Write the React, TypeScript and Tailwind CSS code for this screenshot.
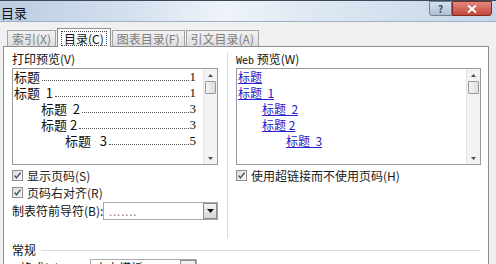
import React from "react";

const cjk = { fontFamily: '"Noto Sans CJK SC", "Noto Sans", sans-serif' };
const serif = { fontFamily: '"Liberation Serif", "Noto Sans CJK SC", serif' };

function Check({ label }: { label: string }) {
  return (
    <div className="flex items-center gap-[4px] h-[17px]">
      <div className="w-[11px] h-[11px] border border-[#8f8f8f] bg-[linear-gradient(135deg,#dcdcdc,#fafafa)] flex items-center justify-center">
        <svg width="9" height="9" viewBox="0 0 9 9">
          <path d="M1.5 4.5 L3.5 6.8 L7.5 1.8" fill="none" stroke="#4a5a6a" strokeWidth="1.4" />
        </svg>
      </div>
      <span className="text-[12px] leading-[14px] text-[#1a1a1a] whitespace-nowrap">{label}</span>
    </div>
  );
}

function ScrollBar() {
  return (
    <div className="w-[14px] flex flex-col bg-[#f3f3f3] border-l border-[#e4e4e4]">
      <div className="h-[12px] flex items-center justify-center">
        <svg width="5" height="3" viewBox="0 0 5 3"><path d="M0 3 L2.5 0 L5 3Z" fill="#505050" /></svg>
      </div>
      <div className="mx-[1px] h-[13px] border border-[#9a9a9a] rounded-[1px] bg-[linear-gradient(to_right,#f4f4f4,#dedede)]" />
      <div className="flex-1" />
      <div className="h-[12px] flex items-center justify-center">
        <svg width="5" height="3" viewBox="0 0 5 3"><path d="M0 0 L2.5 3 L5 0Z" fill="#505050" /></svg>
      </div>
    </div>
  );
}

function TocLine({ text, num, indent }: { text: string; num: string; indent: number }) {
  return (
    <div className="flex items-end h-[16px] text-[12px] leading-[16px] text-[#111]" style={{ paddingLeft: indent }}>
      <span style={cjk} className="whitespace-pre text-[13px]">{text}</span>
      <span className="flex-1 ml-[2px] mr-[1px] mb-[4px] border-b border-dotted border-[#555]" />
      <span style={serif} className="text-[13px]">{num}</span>
    </div>
  );
}

function WebLine({ text, indent }: { text: string; indent: number }) {
  return (
    <div className="h-[16px] text-[12px] leading-[16px]" style={{ paddingLeft: indent }}>
      <span className="underline text-[#2323c8] whitespace-pre">{text}</span>
    </div>
  );
}

function Tab({ label, active }: { label: string; active?: boolean }) {
  if (active) {
    return (
      <div className="h-[19px] px-[4px] flex items-center bg-white border border-b-0 border-[#8c8e94] -mb-[1px] relative z-10">
        <span className="text-[12px] leading-[13px] text-[#111] outline-1 outline-dotted outline-[#444] px-[2px] whitespace-nowrap">{label}</span>
      </div>
    );
  }
  return (
    <div className="h-[16px] px-[4px] flex items-center bg-[linear-gradient(#f2f2f2,#dedede)] border border-b-0 border-[#a3a3a3]">
      <span className="text-[12px] leading-[13px] text-[#7d7d7d] whitespace-nowrap">{label}</span>
    </div>
  );
}

export default function App() {
  return (
    <div className="w-[496px] h-[264px] overflow-hidden flex flex-col bg-[#f0f0f0]" style={cjk}>
      {/* Title bar */}
      <div className="h-[25px] flex items-start border-t border-[#3a4a5a] bg-[linear-gradient(to_right,#bccde2,#d2dfee_25%,#eef3f9_45%,#dde7f2_65%,#c6d6e8)] border-b border-b-[#9fb1c6]">
        <div className="flex-1 pl-[1px] pt-[4px] text-[13px] leading-[16px] text-[#101010]">目录</div>
        <div className="flex mr-[4px]">
          <div className="w-[23px] h-[15px] border border-[#6d7f95] rounded-bl-[3px] bg-[linear-gradient(#d7e2ee,#aebfd2)] flex items-center justify-center text-[10px] leading-[10px] text-[#3c4a5a] font-bold">?</div>
          <div className="w-[40px] h-[15px] border border-[#7a2a20] rounded-br-[3px] bg-[linear-gradient(#e08a7e,#c5473a)] flex items-center justify-center">
            <svg width="10" height="8" viewBox="0 0 10 8"><path d="M1 0.5 L9 7.5 M9 0.5 L1 7.5" stroke="#fff" strokeWidth="2" /></svg>
          </div>
        </div>
      </div>

      {/* Body */}
      <div className="flex-1 flex flex-col pl-[3px] pr-[7px] pt-[4px]">
        {/* Tabs */}
        <div className="flex items-end h-[20px] pl-[4px] gap-[1px]">
          <Tab label="索引(X)" />
          <Tab label="目录(C)" active />
          <Tab label="图表目录(F)" />
          <Tab label="引文目录(A)" />
        </div>

        {/* Panel */}
        <div className="flex-1 bg-white border border-[#8c8e94] flex flex-col pl-[8px] pr-[6px] pt-[5px]">
          <div className="flex">
            {/* left */}
            <div className="w-[206px] flex flex-col">
              <div className="h-[14px] text-[12px] leading-[14px] text-[#111]">打印预览(V)</div>
              <div className="h-[97px] mt-[2px] border border-[#9a9a9a] flex">
                <div className="flex-1 pl-[1px] pr-[7px] flex flex-col">
                  <TocLine text="标题" num="1" indent={0} />
                  <TocLine text="标题  1" num="1" indent={0} />
                  <TocLine text="标题  2" num="3" indent={27} />
                  <TocLine text="标题 2" num="3" indent={27} />
                  <TocLine text="标题   3" num="5" indent={51} />
                </div>
                <ScrollBar />
              </div>
              <div className="mt-[2px] flex flex-col">
                <Check label="显示页码(S)" />
                <Check label="页码右对齐(R)" />
              </div>
              <div className="flex items-center mt-[1px] h-[18px]">
                <span className="text-[12px] leading-[14px] text-[#111] w-[91px] whitespace-nowrap">制表符前导符(B):</span>
                <div className="flex-1 h-[18px] border border-[#a9a9a9] flex items-center">
                  <span className="flex-1 pl-[5px] text-[11px] leading-[10px] text-[#777] tracking-[1px]">.......</span>
                  <div className="w-[14px] h-[16px] border border-[#8a8a8a] bg-[linear-gradient(#f4f4f4,#d6d6d6)] flex items-center justify-center">
                    <svg width="7" height="4" viewBox="0 0 7 4"><path d="M0 0 L3.5 4 L7 0Z" fill="#111" /></svg>
                  </div>
                </div>
              </div>
            </div>

            {/* divider */}
            <div className="w-[18px] flex justify-center">
              <div className="w-[1px] h-[186px] bg-[#d9dde2]" />
            </div>

            {/* right */}
            <div className="flex-1 flex flex-col pr-[1px]">
              <div className="h-[14px] text-[12px] leading-[14px] text-[#111]">
                <span style={{ fontFamily: '"DejaVu Sans Mono", monospace' }} className="text-[10px]">Web</span> 预览(W)
              </div>
              <div className="h-[97px] mt-[2px] border border-[#9a9a9a] flex">
                <div className="flex-1 pl-[1px] flex flex-col">
                  <WebLine text="标题" indent={0} />
                  <WebLine text="标题  1" indent={0} />
                  <WebLine text="标题  2" indent={24} />
                  <WebLine text="标题 2" indent={24} />
                  <WebLine text="标题  3" indent={48} />
                </div>
                <ScrollBar />
              </div>
              <div className="mt-[2px]">
                <Check label="使用超链接而不使用页码(H)" />
              </div>
            </div>
          </div>

          {/* 常规 */}
          <div className="flex items-center h-[14px] mt-[5px]">
            <span className="text-[12px] leading-[14px] text-[#111]">常规</span>
            <div className="flex-1 ml-[5px] mr-[2px] h-[1px] bg-[#d9dde2]" />
          </div>
          <div className="flex items-start mt-[2px] pl-[8px]">
            <span className="text-[12px] leading-[14px] text-[#111] w-[70px] pt-[2px]">格式(T):</span>
            <div className="w-[107px] h-[18px] border border-[#a9a9a9] flex">
              <span className="flex-1 pl-[4px] text-[12px] leading-[16px] text-[#111]">来自模板</span>
              <div className="w-[16px] h-[16px] border border-[#8a8a8a] bg-[linear-gradient(#f4f4f4,#d6d6d6)]" />
            </div>
          </div>
        </div>
      </div>
    </div>
  );
}
